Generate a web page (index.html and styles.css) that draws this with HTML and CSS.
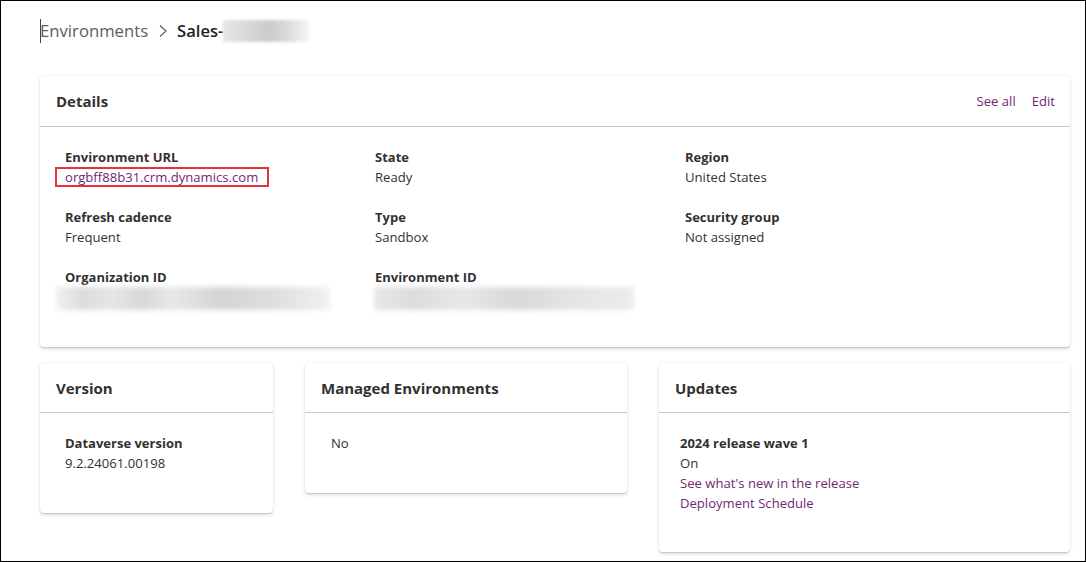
FILE: index.html
```html
<!DOCTYPE html>
<html lang="en">
<head>
<meta charset="utf-8">
<title>Environment details</title>
<link rel="stylesheet" href="styles.css">
</head>
<body>
<div class="frame">
  <nav class="breadcrumb">
    <span class="caret"></span>
    <span class="crumb">Environments</span>
    <svg class="chev" width="10" height="14" viewBox="0 0 10 14"><path d="M2 1.5 L8 7 L2 12.5" fill="none" stroke="#605e5c" stroke-width="1.2"/></svg>
    <span class="current">Sales-</span>
    <span class="blur-name"></span>
  </nav>

  <section class="card details">
    <header class="card-head">
      <h2>Details</h2>
      <div class="actions"><a href="#">See all</a><a href="#">Edit</a></div>
    </header>
    <div class="fields">
      <div class="field">
        <div class="label">Environment URL</div>
        <div class="value"><a href="#" class="link highlight">orgbff88b31.crm.dynamics.com</a></div>
      </div>
      <div class="field">
        <div class="label">State</div>
        <div class="value">Ready</div>
      </div>
      <div class="field">
        <div class="label">Region</div>
        <div class="value">United States</div>
      </div>
      <div class="field">
        <div class="label">Refresh cadence</div>
        <div class="value">Frequent</div>
      </div>
      <div class="field">
        <div class="label">Type</div>
        <div class="value">Sandbox</div>
      </div>
      <div class="field">
        <div class="label">Security group</div>
        <div class="value">Not assigned</div>
      </div>
      <div class="field">
        <div class="label">Organization ID</div>
        <div class="blurred org"></div>
      </div>
      <div class="field">
        <div class="label">Environment ID</div>
        <div class="blurred env"></div>
      </div>
    </div>
  </section>

  <div class="row">
    <section class="card small">
      <header class="card-head"><h2>Version</h2></header>
      <div class="card-body version-body">
        <div class="label">Dataverse version</div>
        <div class="value">9.2.24061.00198</div>
      </div>
    </section>
    <section class="card small">
      <header class="card-head"><h2>Managed Environments</h2></header>
      <div class="card-body managed-body">
        <div class="value">No</div>
      </div>
    </section>
    <section class="card small">
      <header class="card-head"><h2>Updates</h2></header>
      <div class="card-body updates-body">
        <div class="label">2024 release wave 1</div>
        <div class="value">On</div>
        <div class="value"><a href="#" class="link">See what's new in the release</a></div>
        <div class="value"><a href="#" class="link">Deployment Schedule</a></div>
      </div>
    </section>
  </div>
</div>
</body>
</html>
```

FILE: styles.css
```css
* { box-sizing: border-box; }
html, body { margin: 0; padding: 0; background: #fff; }
body {
  font-family: "Open Sans", "Noto Sans", "Liberation Sans", sans-serif;
  color: #323130;
  font-size: 13.1px;
}
.frame {
  width: 1086px;
  height: 562px;
  border: 1px solid #000;
  padding: 18px 15px 0 39px;
  overflow: hidden;
}
.breadcrumb {
  display: flex;
  align-items: center;
  height: 24px;
  line-height: 24px;
}
.caret {
  width: 1px;
  height: 24px;
  background: #444;
  margin-right: -1px;
}
.crumb {
  font-size: 16.7px;
  color: #605e5c;
}
.chev { margin: 0 9px 0 10px; }
.current {
  font-size: 16.6px;
  font-weight: 600;
  color: #201f1e;
}
.blur-name {
  width: 86px;
  height: 22px;
  background: linear-gradient(90deg, #e6e6e6 0%, #d8d8d8 30%, #cbcbcb 55%, #dcdcdc 75%, #f6f6f6 100%);
  filter: blur(1.5px);
}
.card {
  background: #fff;
  border-radius: 4px;
  box-shadow: 0 1.6px 3.6px rgba(0,0,0,0.14), 0 0.3px 0.9px rgba(0,0,0,0.12);
}
.details {
  margin-top: 33px;
  padding-bottom: 37px;
}
.card-head {
  display: flex;
  align-items: center;
  justify-content: space-between;
  height: 51px;
  padding: 0 15px 0 16px;
  border-bottom: 1px solid #c8c8c8;
}
.small .card-head { height: 50px; }
.card-head h2 {
  margin: 0;
  font-size: 15px;
  font-weight: 700;
  color: #323130;
}
.actions { display: flex; gap: 16px; }
.actions a, .link {
  color: #742774;
  text-decoration: none;
}
.fields {
  display: grid;
  grid-template-columns: 310px 310px 310px;
  row-gap: 20px;
  padding: 20px 0 0 25px;
}
.label {
  font-weight: 700;
  line-height: 20px;
  font-size: 13px;
}
.value {
  line-height: 20px;
}
.highlight {
  display: inline-block;
  margin-left: -10px;
  padding: 0 9px 0 8px;
  border: 2px solid #e2333b;
  line-height: 16px;
}
.blurred {
  height: 23px;
  filter: blur(2.5px);
}
.blurred.org {
  width: 274px;
  margin-left: -9px;
  background: linear-gradient(90deg, #f0f0f0 0%, #dcdcdc 10%, #e6e6e6 20%, #d8d8d8 32%, #e8e8e8 42%, #d4d4d4 60%, #dedede 80%, #f2f2f2 100%);
}
.blurred.env {
  width: 260px;
  margin-left: -1px;
  background: linear-gradient(90deg, #e8e8e8 0%, #dcdcdc 15%, #e8e8e8 35%, #d8d8d8 55%, #e4e4e4 75%, #ececec 100%);
}
.row {
  display: grid;
  grid-template-columns: 233px 322px 1fr;
  column-gap: 32px;
  align-items: start;
  margin-top: 16px;
}
.card-body { padding: 20px 0 40px 25px; }
.managed-body { padding-left: 26px; }
.updates-body { padding-left: 21px; padding-bottom: 39px; }
```
